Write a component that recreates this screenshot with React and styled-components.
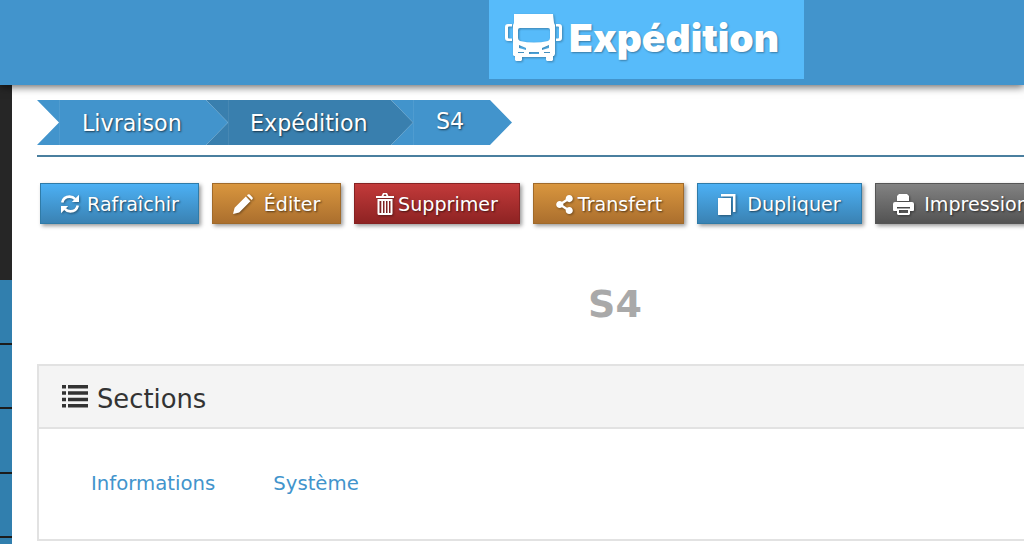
import React from "react";
import styled, { createGlobalStyle } from "styled-components";
import { FaShareAlt } from "react-icons/fa";

const Global = createGlobalStyle`
  html, body { margin: 0; padding: 0; background: #fff; }
  body { font-family: "DejaVu Sans", Verdana, sans-serif; }
  * { box-sizing: border-box; }
`;

const Page = styled.div`
  width: 1024px;
  height: 544px;
  overflow: hidden;
  display: flex;
  flex-direction: column;
`;
const Header = styled.header`
  height: 85px;
  flex: none;
  background: #4294cc;
  display: flex;
  align-items: flex-start;
  padding-left: 489px;
  position: relative;
  z-index: 2;
  box-shadow: 0 2px 8px rgba(0, 0, 0, 0.6);
`;
const Brand = styled.div`
  width: 315px;
  height: 79px;
  background: #57bbfa;
  display: flex;
  align-items: center;
  gap: 7px;
  padding: 0 0 4px 16px;
`;
const BrandTitle = styled.h1`
  margin: 0;
  font-family: Inter, sans-serif;
  font-weight: 900;
  font-size: 39px;
  color: #fff;
  text-shadow: 1px 1px 2px rgba(0, 0, 0, 0.35);
`;
const Body = styled.div`
  flex: 1;
  display: flex;
  min-height: 0;
`;
const Sidebar = styled.nav`
  width: 12px;
  flex: none;
  display: flex;
  flex-direction: column;
  background: #317fae;
`;
const SideDark = styled.div`
  height: 195px;
  background: #262626;
`;
const SideItem = styled.div`
  height: 64.5px;
  flex: none;
  border-bottom: 2px solid #1c1c1c;
`;
const Main = styled.main`
  flex: none;
  width: 1156px;
  margin-left: 25px;
  padding-top: 15px;
  display: flex;
  flex-direction: column;
`;
const Crumbs = styled.div`
  display: flex;
  height: 45px;
`;
const Crumb = styled.div`
  width: ${(p) => p.$w}px;
  margin-left: ${(p) => (p.$first ? 0 : -22)}px;
  z-index: ${(p) => p.$z};
  padding-left: ${(p) => p.$pad}px;
  padding-top: 1px;
  padding-bottom: ${(p) => p.$lift || 0}px;
  display: flex;
  align-items: center;
  color: #fff;
  font-size: 22.2px;
  text-shadow: 1px 1px 2px rgba(0, 0, 0, 0.6);
  background-color: ${(p) => (p.$dark ? "#397fae" : "#4294cc")};
  background-image: linear-gradient(rgba(255, 255, 255, 0.07), rgba(255, 255, 255, 0.07));
  background-size: 1px 100%;
  background-repeat: no-repeat;
  background-position: 22px 0;
  clip-path: polygon(0 0, calc(100% - 22px) 0, 100% 50%, calc(100% - 22px) 100%, 0 100%, 22px 50%);
`;
const Rule = styled.div`
  height: 2px;
  margin-top: 10px;
  background: #4a7f9f;
`;
const Toolbar = styled.div`
  display: flex;
  gap: 13px;
  margin: 26px 0 0 3px;
`;
const tones = {
  blue: ["#4cb0f4", "#3a82b3", "#2f7ba8"],
  orange: ["#d9963e", "#ab6f2e", "#a06a2a"],
  red: ["#c23a3a", "#8e2323", "#862222"],
  gray: ["#828282", "#535353", "#555"],
};
const Button = styled.button`
  width: ${(p) => p.$w}px;
  height: 41px;
  flex: none;
  padding: 1px 0 0;
  display: flex;
  align-items: center;
  justify-content: center;
  gap: ${(p) => p.$gap}px;
  border: 1px solid ${(p) => tones[p.$tone][2]};
  background: linear-gradient(${(p) => tones[p.$tone][0]}, ${(p) => tones[p.$tone][1]});
  box-shadow: 2px 2px 4px rgba(0, 0, 0, 0.4);
  color: #fff;
  font-family: inherit;
  font-size: 19.1px;
  text-shadow: 1px 1px 2px rgba(0, 0, 0, 0.6);
  svg {
    flex: none;
    filter: drop-shadow(1px 1px 1px rgba(0, 0, 0, 0.4));
  }
`;
const Heading = styled.h2`
  margin: 55px 0 0;
  height: 50px;
  display: flex;
  align-items: center;
  justify-content: center;
  font-family: "DejaVu Sans", sans-serif;
  font-size: 38px;
  font-weight: 700;
  color: #a9a9a9;
`;
const Panel = styled.section`
  margin-top: 35px;
  height: 177px;
  border: 2px solid #e2e2e2;
  display: flex;
  flex-direction: column;
`;
const PanelHead = styled.div`
  height: 63px;
  flex: none;
  background: #f4f4f4;
  border-bottom: 2px solid #e2e2e2;
  display: flex;
  align-items: center;
  gap: 9px;
  padding: 5px 0 0 23px;
  color: #333;
  font-size: 25.8px;
  svg {
    margin-top: -5px;
  }
`;
const Tabs = styled.div`
  display: flex;
  gap: 58px;
  padding: 43px 0 0 52px;
`;
const Tab = styled.a`
  color: #4294cc;
  font-size: 19.7px;
`;

const Truck = () => (
  <svg width="57" height="47" viewBox="0 0 57 47" fill="#fff" style={{ filter: "drop-shadow(1px 1px 1px rgba(0,0,0,.3))" }}>
    <path
      fillRule="evenodd"
      d="M9 0h39l1 9 1 2v29l-1 2h-1v4l-1 1h-5l-1-1v-3H17v3l-1 1h-5l-1-1v-4H9l-1-1V11l1-2zM15 14q-2 0-2 2v8q0 2 2 3 14 3 28 0 2-1 2-3v-8q0-2-2-2zM14 31v3l7 2v-2zM44 31l-7 3v2l7-2zM24 38v2h10v-2zM13 38v1h6v-1zM39 38v1h6v-1z"
    />
    <path
      fillRule="evenodd"
      d="M0 13q0-3 3-3h4v2.500H4q-1 0-1 1v10q0 1 1 1h3V27H3q-3 0-3-3zM57 13q0-3-3-3h-3v2.500h2q1 0 1 1v10q0 1-1 1h-2V27h3q3 0 3-3z"
    />
  </svg>
);

const RefreshIcon = () => (
  <svg width="20" height="20" viewBox="0 0 20 20">
    <path d="M2.2 8.5C3 5 6 2.6 9.6 2.6c2.2 0 4.2 1 5.6 2.6M17.8 11.5C17 15 14 17.4 10.4 17.4c-2.2 0-4.2-1-5.6-2.6" fill="none" stroke="#fff" strokeWidth="2.6" />
    <path d="M19 0.8V8h-7.2zM1 19.2V12h7.2z" fill="#fff" />
  </svg>
);
const PencilIcon = () => (
  <svg width="20" height="20" viewBox="0 0 20 20" fill="#fff">
    <path d="M0 20l1.6-6.2L12.8 2.6l4.6 4.6L6.2 18.4zM14 1.4l.8-.8q1-.9 2 0l2.6 2.6q.9 1 0 2l-.8.8z" />
  </svg>
);
const TrashIcon = () => (
  <svg width="18" height="22" viewBox="0 0 18 22" fill="#fff">
    <path
      fillRule="evenodd"
      d="M5.500 3L7 0h4l1.500 3H18v2H0V3zM7.500 3h3l-.7-1.400H8.200zM1.500 6h15v14.500q0 1.500-1.500 1.500H3q-1.500 0-1.500-1.500zM3.500 8v12h1.800V8zM7 8v12h1.500V8zM10 8v12h1.500V8zM13 8v12h1.500V8z"
    />
  </svg>
);
const CopyIcon = () => (
  <svg width="18" height="21" viewBox="0 0 18 21" fill="#fff">
    <path d="M0 4h13v17H0z" />
    <path d="M3 0h14.500v18H15V2.500H3z" />
  </svg>
);
const PrintIcon = () => (
  <svg width="21" height="21" viewBox="0 0 21 21" fill="#fff">
    <path d="M6 0h8l2 2v5H4V2z" />
    <path
      fillRule="evenodd"
      d="M2 8h17q2 0 2 2v6q0 1-1 1h-3v3l-1 1H5l-1-1v-3H1q-1 0-1-1v-6q0-2 2-2zM4 13v1.500h13V13zM6 16v3h9v-3z"
    />
  </svg>
);
const ListIcon = () => (
  <svg width="26" height="23" viewBox="0 0 26 23" fill="#333">
    <path d="M0 0h4v3.500H0zM6 0h20v3.500H6zM0 6.300h4v3.500H0zM6 6.300h20v3.500H6zM0 12.700h4v3.500H0zM6 12.700h20v3.500H6zM0 19h4v3.500H0zM6 19h20v3.500H6z" />
  </svg>
);

const buttons = [
  { label: "Rafraîchir", tone: "blue", w: 159, gap: 7, icon: <RefreshIcon /> },
  { label: "Éditer", tone: "orange", w: 129, gap: 11, icon: <PencilIcon /> },
  { label: "Supprimer", tone: "red", w: 166, gap: 4, icon: <TrashIcon /> },
  { label: "Transfert", tone: "orange", w: 151, gap: 4, icon: <FaShareAlt size={19} /> },
  { label: "Dupliquer", tone: "blue", w: 165, gap: 11, icon: <CopyIcon /> },
  { label: "Impression", tone: "gray", w: 172, gap: 10, icon: <PrintIcon /> },
];

export default function App() {
  return (
    <Page>
      <Global />
      <Header>
        <Brand>
          <Truck />
          <BrandTitle>Expédition</BrandTitle>
        </Brand>
      </Header>
      <Body>
        <Sidebar>
          <SideDark />
          <SideItem />
          <SideItem />
          <SideItem />
          <SideItem />
        </Sidebar>
        <Main>
          <Crumbs>
            <Crumb $first $w={191} $z={3} $pad={45}>Livraison</Crumb>
            <Crumb $w={207} $z={2} $pad={44} $dark>Expédition</Crumb>
            <Crumb $w={121} $z={1} $pad={45} $lift={4}>S4</Crumb>
          </Crumbs>
          <Rule />
          <Toolbar>
            {buttons.map((b) => (
              <Button key={b.label} $tone={b.tone} $w={b.w} $gap={b.gap}>
                {b.icon}
                {b.label}
              </Button>
            ))}
          </Toolbar>
          <Heading>S4</Heading>
          <Panel>
            <PanelHead>
              <ListIcon />
              Sections
            </PanelHead>
            <Tabs>
              <Tab>Informations</Tab>
              <Tab>Système</Tab>
            </Tabs>
          </Panel>
        </Main>
      </Body>
    </Page>
  );
}
